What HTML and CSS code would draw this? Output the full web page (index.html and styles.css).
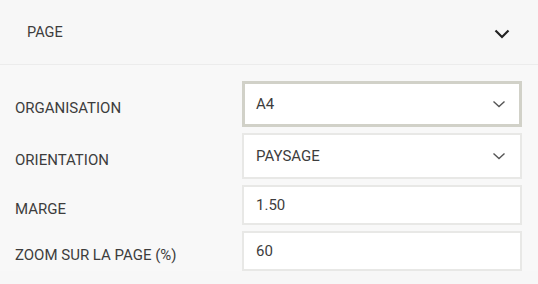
FILE: index.html
```html
<!DOCTYPE html>
<html lang="fr">
<head>
    <meta charset="UTF-8">
    <meta name="viewport" content="width=device-width, initial-scale=1.0">
    <title>Page</title>
    <link rel="stylesheet" href="styles.css">
</head>
<body>

    <div class="panel">
        <div class="panel-header">
            <span class="panel-title">PAGE</span>
            <svg class="chevron-big" width="16" height="10" viewBox="0 0 16 10">
                <path d="M1.5 1.5 L8 8 L14.5 1.5" fill="none" stroke="#222" stroke-width="2.2"/>
            </svg>
        </div>

        <!-- Page settings -->
        <div class="panel-body">
            <div class="row">
                <label class="label">ORGANISATION</label>
                <div class="field select focused">
                    <span>A4</span>
                    <svg class="chevron" width="14" height="8" viewBox="0 0 14 8">
                        <path d="M1.5 1.5 L7 6.5 L12.5 1.5" fill="none" stroke="#555" stroke-width="1.4"/>
                    </svg>
                </div>
            </div>
            <div class="row">
                <label class="label">ORIENTATION</label>
                <div class="field select">
                    <span>PAYSAGE</span>
                    <svg class="chevron" width="14" height="8" viewBox="0 0 14 8">
                        <path d="M1.5 1.5 L7 6.5 L12.5 1.5" fill="none" stroke="#555" stroke-width="1.4"/>
                    </svg>
                </div>
            </div>
            <div class="row">
                <label class="label">MARGE</label>
                <div class="field input"><span>1.50</span></div>
            </div>
            <div class="row">
                <label class="label">ZOOM SUR LA PAGE (%)</label>
                <div class="field input"><span>60</span></div>
            </div>
        </div>
    </div>

</body>
</html>
```

FILE: styles.css
```css
body {
    margin: 0;
    padding: 0;
    background-color: #f7f7f7;
    font-family: Roboto, "Liberation Sans", Arial, sans-serif;
    color: #3d3d3d;
}

.panel-header {
    height: 64px;
    display: flex;
    align-items: center;
    justify-content: space-between;
    padding: 0 28px 0 27px;
    border-bottom: 1px solid #ececec;
    background-color: #f7f7f7;
}

.panel-title {
    font-size: 14.5px;
    padding-top: 1px;
}

.chevron-big {
    margin-top: 3px;
}

.panel-body {
    padding: 16px 16px 0 15px;
    display: flex;
    flex-direction: column;
    gap: 6px;
    background-color: #f8f8f8;
}

.row {
    display: flex;
    align-items: center;
    justify-content: space-between;
}

.label {
    font-size: 15px;
    padding-top: 7px;
}

.field {
    box-sizing: border-box;
    width: 280px;
    display: flex;
    align-items: center;
    justify-content: space-between;
    background-color: #fff;
    border: 2px solid #e8e8e6;
    padding: 0 14px 0 12px;
    font-size: 15px;
    color: #3d3d3d;
}

.select {
    height: 46px;
}

.input {
    height: 40px;
}

.focused {
    border: 3px solid #d1d1c8;
    padding-left: 11px;
    padding-right: 13px;
}
```
